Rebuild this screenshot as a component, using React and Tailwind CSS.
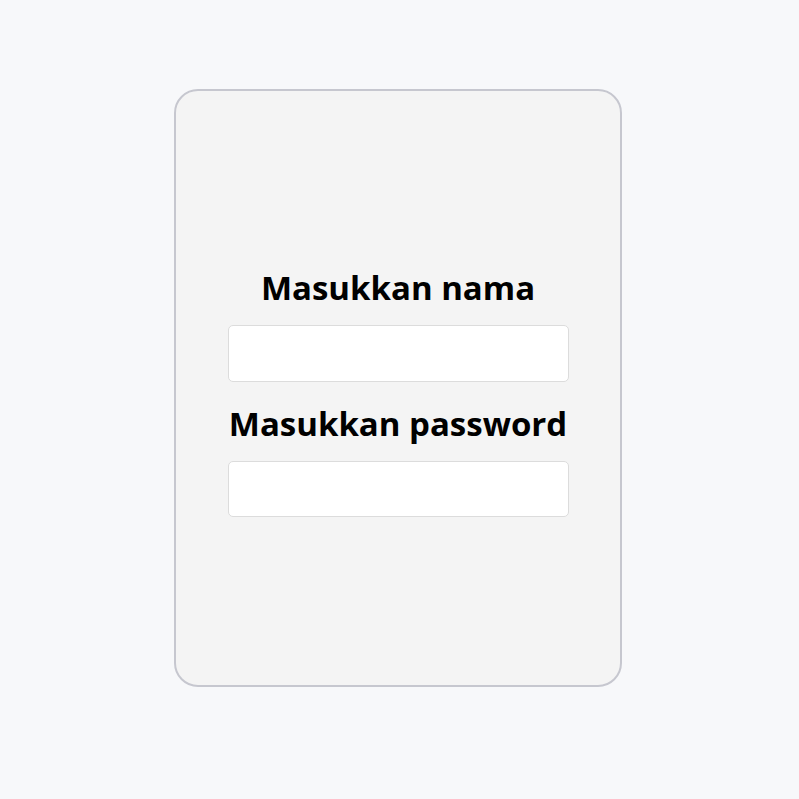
export default function App() {
  return (
    <div className="min-h-[799px] bg-[#f7f8fa] flex justify-center items-start pt-[89px] pr-[3px] font-['Open_Sans',sans-serif]">
      <div className="w-[448px] h-[598px] bg-[#f4f4f4] border-2 border-[#c6c7cf] rounded-[24px] flex flex-col items-center justify-center pt-[8px]">
        <h1 className="text-[33px] leading-[40px] font-bold text-black">Masukkan nama</h1>
        <input type="text" className="mt-[17px] w-[341px] h-[57px] bg-white border border-[#dcdcdc] rounded-[5px] outline-none" />
        <h1 className="mt-[22px] text-[33px] leading-[40px] font-bold text-black">Masukkan password</h1>
        <input type="password" className="mt-[17px] w-[341px] h-[56px] bg-white border border-[#dcdcdc] rounded-[5px] outline-none" />
      </div>
    </div>
  )
}
